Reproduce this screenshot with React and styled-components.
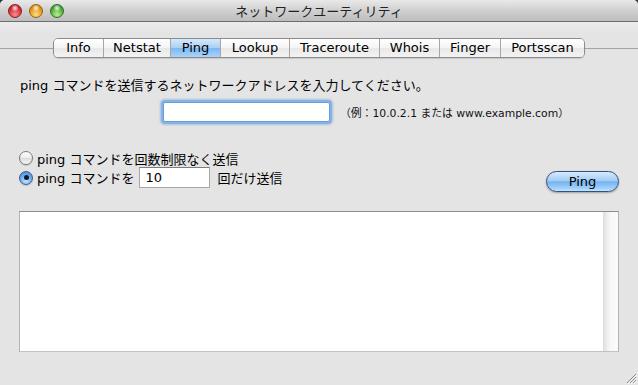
import styled, { createGlobalStyle } from 'styled-components';

const GlobalStyle = createGlobalStyle`
  html, body {
    margin: 0;
    padding: 0;
    background: #3a2d45;
  }
  body {
    font-family: "DejaVu Sans", "Noto Sans CJK JP", sans-serif;
    font-size: 13px;
    color: #000;
  }
`;

const Window = styled.div`
  width: 638px;
  height: 385px;
  display: flex;
  flex-direction: column;
  background: #e4e4e4;
  border-radius: 5px 5px 0 0;
  overflow: hidden;
  position: relative;
`;

const TitleBar = styled.div`
  height: 21px;
  border-bottom: 1px solid #6e6e6e;
  background: linear-gradient(#e9e9e9, #d0d0d0 50%, #bdbdbd);
  display: flex;
  align-items: center;
  position: relative;
  padding-left: 8px;
  gap: 7px;
`;

const Light = styled.span`
  width: 14px;
  height: 14px;
  border-radius: 50%;
  box-sizing: border-box;
  border: 1px solid ${p => p.$edge};
  background:
    radial-gradient(circle at 50% 25%, rgba(255,255,255,0.9) 0, rgba(255,255,255,0) 35%),
    radial-gradient(circle at 50% 80%, ${p => p.$glow} 0, ${p => p.$color} 70%);
  margin-top: 1px;
`;

const Title = styled.div`
  position: absolute;
  left: 0;
  right: 0;
  text-align: center;
  font-size: 13px;
  color: #222;
  pointer-events: none;
`;

const Body = styled.div`
  flex: 1;
  display: flex;
  flex-direction: column;
  background: linear-gradient(#ececec, #e4e4e4 12px);
`;

const TabRow = styled.div`
  display: flex;
  align-items: center;
  margin-top: 16px;
`;

const TabLine = styled.div`
  flex: 1;
  height: 1px;
  background: #a4a4a4;
`;

const TabGroup = styled.div`
  display: flex;
  height: 18px;
  border: 1px solid #8c8c8c;
  border-radius: 5px;
  overflow: hidden;
  box-shadow: 0 1px 1px rgba(0,0,0,0.12);
`;

const Tab = styled.div`
  width: ${p => p.$w}px;
  box-sizing: border-box;
  display: flex;
  align-items: center;
  justify-content: center;
  font-size: 13px;
  line-height: 18px;
  border-left: ${p => (p.$first ? 'none' : '1px solid #a6a6a6')};
  background: ${p => (p.$active
    ? 'linear-gradient(#d6e9fb, #a9cff5 50%, #7db8f1 51%, #a8d3fa)'
    : 'linear-gradient(#ffffff, #f4f4f4 50%, #e8e8e8 51%, #f3f3f3)')};
`;

const Content = styled.div`
  display: flex;
  flex-direction: column;
  padding: 0 19px;
`;

const Label = styled.div`
  margin-top: 20px;
  line-height: 16px;
  padding-left: 1px;
`;

const AddressRow = styled.div`
  display: flex;
  align-items: center;
  margin-top: 8px;
  padding-left: 144px;
  gap: 10px;
`;

const AddressInput = styled.div`
  width: 167px;
  height: 20px;
  box-sizing: border-box;
  background: #fff;
  border: 1px solid #6b9bd6;
  border-radius: 2px;
  box-shadow: 0 0 0 2px #84b3e8, 0 0 2px 3px rgba(110,160,220,0.5);
`;

const Hint = styled.span`
  font-size: 10.8px;
  color: #111;
`;

const OptionsRow = styled.div`
  display: flex;
  justify-content: space-between;
  align-items: flex-start;
  margin-top: 28px;
`;

const RadioGroup = styled.div`
  display: flex;
  flex-direction: column;
  gap: 1px;
`;

const RadioRow = styled.div`
  display: flex;
  align-items: center;
  height: ${p => p.$h}px;
  gap: 4px;
`;

const Radio = styled.span`
  width: 14px;
  height: 14px;
  box-sizing: border-box;
  border-radius: 50%;
  display: flex;
  align-items: center;
  justify-content: center;
  border: 1px solid ${p => (p.$on ? '#3c5f8f' : '#7a7a7a')};
  background: ${p => (p.$on
    ? 'radial-gradient(circle at 50% 75%, #c5e4ff 0, #6aa9ea 55%, #3a7ed0 100%)'
    : 'linear-gradient(#ffffff, #ececec 50%, #dcdcdc 51%, #f6f6f6)')};
  box-shadow: 0 1px 1px rgba(0,0,0,0.15);

  &::after {
    content: '';
    display: ${p => (p.$on ? 'block' : 'none')};
    width: 5px;
    height: 5px;
    border-radius: 50%;
    background: #111a2b;
  }
`;

const CountInput = styled.div`
  width: 71px;
  height: 21px;
  box-sizing: border-box;
  background: #fff;
  border: 1px solid #a8a8a8;
  border-top-color: #7c7c7c;
  margin: 0 4px 0 0;
  padding-left: 6px;
  display: flex;
  align-items: center;
`;

const PingButton = styled.button`
  margin-top: 21px;
  width: 73px;
  height: 21px;
  border-radius: 11px;
  border: 1px solid #34507e;
  font-family: inherit;
  font-size: 13px;
  color: #000;
  padding: 0;
  background: linear-gradient(#d7eafc, #a3cdf5 45%, #74b2ef 52%, #9fd0fb 85%, #c4e6ff);
  box-shadow: 0 1px 2px rgba(0,0,0,0.3);
`;

const Output = styled.div`
  margin-top: 19px;
  height: 141px;
  box-sizing: border-box;
  display: flex;
  background: #fff;
  border: 1px solid #b4b4b4;
  border-top-color: #8e8e8e;
  border-bottom-color: #c2c2c2;
`;

const OutputText = styled.div`
  flex: 1;
`;

const ScrollTrack = styled.div`
  width: 15px;
  background: linear-gradient(90deg, #dcdcdc, #eeeeee 4px, #f8f8f8 8px, #fbfbfb);
`;

const Grip = styled.svg`
  position: absolute;
  right: 1px;
  bottom: 1px;
`;

const tabs = [
  ['Info', 49],
  ['Netstat', 67],
  ['Ping', 50],
  ['Lookup', 69],
  ['Traceroute', 90],
  ['Whois', 60],
  ['Finger', 61],
  ['Portsscan', 84],
];

export default function App() {
  return (
    <>
      <GlobalStyle />
      <Window>
        <TitleBar>
          <Light $color="#c8202a" $glow="#ff8a8a" $edge="#8a1a1f" />
          <Light $color="#d9860c" $glow="#ffe27a" $edge="#9a5f10" />
          <Light $color="#3c9e2a" $glow="#b6f28a" $edge="#2f6e22" />
          <Title>ネットワークユーティリティ</Title>
        </TitleBar>
        <Body>
          <TabRow>
            <TabLine />
            <TabGroup>
              {tabs.map(([name, w], i) => (
                <Tab key={name} $w={w} $first={i === 0} $active={name === 'Ping'}>
                  {name}
                </Tab>
              ))}
            </TabGroup>
            <TabLine />
          </TabRow>
          <Content>
            <Label>ping コマンドを送信するネットワークアドレスを入力してください。</Label>
            <AddressRow>
              <AddressInput />
              <Hint>（例：10.0.2.1 または www.example.com）</Hint>
            </AddressRow>
            <OptionsRow>
              <RadioGroup>
                <RadioRow $h={16}>
                  <Radio />
                  <span>ping コマンドを回数制限なく送信</span>
                </RadioRow>
                <RadioRow $h={21}>
                  <Radio $on />
                  <span>ping コマンドを</span>
                  <CountInput>10</CountInput>
                  <span>回だけ送信</span>
                </RadioRow>
              </RadioGroup>
              <PingButton>Ping</PingButton>
            </OptionsRow>
            <Output>
              <OutputText />
              <ScrollTrack />
            </Output>
          </Content>
        </Body>
        <Grip width="11" height="11" viewBox="0 0 11 11">
          <path d="M10 1 L1 10 M10 4 L4 10 M10 7 L7 10" stroke="#8a8a8a" strokeWidth="1" />
          <path d="M11 2 L2 11 M11 5 L5 11 M11 8 L8 11" stroke="#fafafa" strokeWidth="1" />
        </Grip>
      </Window>
    </>
  );
}
